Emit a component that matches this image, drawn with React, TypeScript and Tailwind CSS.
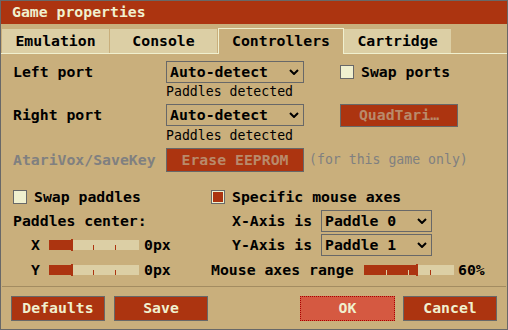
import type { ReactNode } from "react";

function Chevron() {
  return (
    <svg width="10" height="6" viewBox="0 0 10 6" className="shrink-0">
      <path d="M1 1 L5 5 L9 1" fill="none" stroke="#000" strokeWidth="2" />
    </svg>
  );
}

function Select({ value, className }: { value: string; className: string }) {
  return (
    <div className={`flex h-[22px] items-center justify-between border border-[#686868] pl-[3px] pr-[4px] font-bold ${className}`}>
      <span>{value}</span>
      <Chevron />
    </div>
  );
}

function Checkbox({ checked }: { checked?: boolean }) {
  return (
    <div className="size-[14px] shrink-0 border border-[#686868] bg-[#f0f0cf] p-px">
      {checked ? <div className="size-full bg-[#ac3410]" /> : null}
    </div>
  );
}

// fill = pixels of red before the handle
function Slider({ fill }: { fill: number }) {
  const ticks = [22, 44, 66];
  return (
    <div className="relative h-[10px] w-[90px] shrink-0 bg-[#dccfa5]">
      <div className="absolute inset-y-0 left-0 bg-[#ac3410]" style={{ width: fill }} />
      {ticks.map((t) => (
        <div
          key={t}
          className={t < fill ? "absolute top-[5px] h-[5px] w-px bg-[#dccfa5]" : "absolute top-[5px] h-[5px] w-px bg-[#ac3410]"}
          style={{ left: t }}
        />
      ))}
      <div className="absolute -top-px -bottom-px w-[2px] bg-[#ac3410]" style={{ left: fill }} />
    </div>
  );
}

function Button({ children, className }: { children: ReactNode; className: string }) {
  return (
    <div className={`flex items-center justify-center border border-[#686868] bg-[#ac3410] font-bold ${className}`}>{children}</div>
  );
}

function Tab({ label }: { label: string }) {
  return (
    <div className="flex h-[25px] w-[107px] items-center justify-center border-b border-[#f0f0cf] bg-[#dccfa5] font-bold">{label}</div>
  );
}

export default function App() {
  return (
    <div className="flex h-[330px] w-[508px] flex-col border border-[#686868] bg-[#c9af7c] font-['DejaVu_Sans_Mono',monospace] text-[14.8px] leading-none text-black">
      <div className="flex h-[23px] shrink-0 items-center bg-[#ac3410] pl-[11px] font-bold text-[#f0f0cf]">Game properties</div>

      <div className="mt-[4px] flex h-[26px] shrink-0 items-end">
        <div className="h-[25px] w-px border-b border-[#f0f0cf]" />
        <Tab label="Emulation" />
        <div className="h-[25px] w-px border-b border-[#f0f0cf]" />
        <Tab label="Console" />
        <div className="h-[25px] w-px border-b border-[#f0f0cf]" />
        <div className="flex h-[26px] w-[126px] items-center justify-center border-x border-t border-[#f0f0cf] font-bold">Controllers</div>
        <Tab label="Cartridge" />
        <div className="h-[25px] flex-1 border-b border-[#f0f0cf]" />
      </div>

      <div className="flex flex-1 flex-col px-[12px] pt-[7px]">
        <div className="flex h-[22px] items-center">
          <span className="w-[153px] font-bold">Left port</span>
          <Select value="Auto-detect" className="w-[138px]" />
          <div className="ml-[36px] flex items-center gap-[7px]">
            <Checkbox />
            <span className="font-bold">Swap ports</span>
          </div>
        </div>
        <div className="h-[21px] pl-[153px] text-[13.2px] leading-[18px]">Paddles detected</div>
        <div className="flex h-[22px] items-center">
          <span className="w-[153px] font-bold">Right port</span>
          <Select value="Auto-detect" className="w-[138px]" />
          <Button className="ml-[36px] h-[23px] w-[118px] text-[#b98a6b]">QuadTari…</Button>
        </div>
        <div className="h-[22px] pl-[153px] text-[13.2px] leading-[20px]">Paddles detected</div>
        <div className="flex h-[24px] items-center">
          <span className="w-[153px] font-bold text-[#808080]">AtariVox/SaveKey</span>
          <Button className="h-[24px] w-[138px] text-[#b98a6b]">Erase EEPROM</Button>
          <span className="ml-[5px] text-[13.2px] text-[#808080]">(for this game only)</span>
        </div>

        <div className="mt-[13px] grid grid-cols-[198px_1fr] font-bold">
          <div className="flex h-[24px] items-center gap-[7px]">
            <Checkbox />
            <span>Swap paddles</span>
          </div>
          <div className="flex h-[24px] items-center gap-[7px]">
            <Checkbox checked />
            <span>Specific mouse axes</span>
          </div>

          <div className="flex h-[24px] items-center">Paddles center:</div>
          <div className="flex h-[24px] items-center pl-[21px]">
            <span className="w-[89px]">X-Axis is</span>
            <Select value="Paddle 0" className="w-[111px]" />
          </div>

          <div className="flex h-[24px] items-center">
            <span className="w-[27px] text-right">X</span>
            <div className="ml-[9px]">
              <Slider fill={22} />
            </div>
            <span className="ml-[5px]">0px</span>
          </div>
          <div className="flex h-[24px] items-center pl-[21px]">
            <span className="w-[89px]">Y-Axis is</span>
            <Select value="Paddle 1" className="w-[111px]" />
          </div>

          <div className="flex h-[26px] items-center">
            <span className="w-[27px] text-right">Y</span>
            <div className="ml-[9px]">
              <Slider fill={22} />
            </div>
            <span className="ml-[5px]">0px</span>
          </div>
          <div className="flex h-[26px] items-center">
            <span className="w-[153px]">Mouse axes range</span>
            <Slider fill={52} />
            <span className="ml-[4px]">60%</span>
          </div>
        </div>
      </div>

      <div className="mx-px h-px shrink-0 bg-[#a38c61]" />
      <div className="flex shrink-0 px-[10px] pb-[8px] pt-[9px] text-[#f0f0cf]">
        <Button className="h-[25px] w-[94px]">Defaults</Button>
        <Button className="ml-[9px] h-[25px] w-[94px]">Save</Button>
        <div className="ml-auto flex h-[25px] w-[95px] items-center justify-center border border-dotted border-[#a80000] bg-[#d55941] font-bold">OK</div>
        <Button className="ml-[8px] h-[25px] w-[94px]">Cancel</Button>
      </div>
    </div>
  );
}
